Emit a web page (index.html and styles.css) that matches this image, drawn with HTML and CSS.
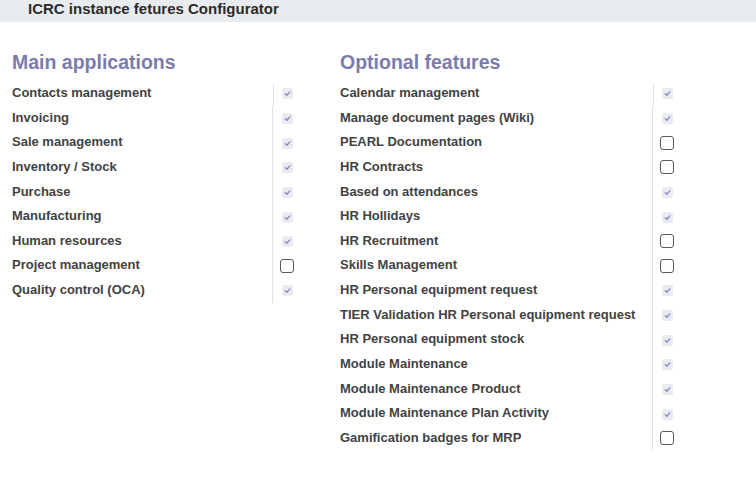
FILE: index.html
```html
<!DOCTYPE html>
<html>
<head>
<meta charset="utf-8">
<link rel="stylesheet" href="styles.css">
</head>
<body>
<div class="topbar">ICRC instance fetures Configurator</div>
<div class="content">
  <section class="group group-main">
    <h2 class="group-title">Main applications</h2>
    <div class="rows">
      <div class="row"><span class="label">Contacts management</span><span class="field"><span class="cb cb-on"><svg viewBox="0 0 11 11"><path d="M3.3 5.7 L4.9 7.2 L7.8 3.9"/></svg></span></span></div>
      <div class="row"><span class="label">Invoicing</span><span class="field"><span class="cb cb-on"><svg viewBox="0 0 11 11"><path d="M3.3 5.7 L4.9 7.2 L7.8 3.9"/></svg></span></span></div>
      <div class="row"><span class="label">Sale management</span><span class="field"><span class="cb cb-on"><svg viewBox="0 0 11 11"><path d="M3.3 5.7 L4.9 7.2 L7.8 3.9"/></svg></span></span></div>
      <div class="row"><span class="label">Inventory / Stock</span><span class="field"><span class="cb cb-on"><svg viewBox="0 0 11 11"><path d="M3.3 5.7 L4.9 7.2 L7.8 3.9"/></svg></span></span></div>
      <div class="row"><span class="label">Purchase</span><span class="field"><span class="cb cb-on"><svg viewBox="0 0 11 11"><path d="M3.3 5.7 L4.9 7.2 L7.8 3.9"/></svg></span></span></div>
      <div class="row"><span class="label">Manufacturing</span><span class="field"><span class="cb cb-on"><svg viewBox="0 0 11 11"><path d="M3.3 5.7 L4.9 7.2 L7.8 3.9"/></svg></span></span></div>
      <div class="row"><span class="label">Human resources</span><span class="field"><span class="cb cb-on"><svg viewBox="0 0 11 11"><path d="M3.3 5.7 L4.9 7.2 L7.8 3.9"/></svg></span></span></div>
      <div class="row"><span class="label">Project management</span><span class="field"><span class="cb cb-off"></span></span></div>
      <div class="row"><span class="label">Quality control (OCA)</span><span class="field"><span class="cb cb-on"><svg viewBox="0 0 11 11"><path d="M3.3 5.7 L4.9 7.2 L7.8 3.9"/></svg></span></span></div>
    </div>
  </section>
  <section class="group group-opt">
    <h2 class="group-title">Optional features</h2>
    <div class="rows">
      <div class="row"><span class="label">Calendar management</span><span class="field"><span class="cb cb-on"><svg viewBox="0 0 11 11"><path d="M3.3 5.7 L4.9 7.2 L7.8 3.9"/></svg></span></span></div>
      <div class="row"><span class="label">Manage document pages (Wiki)</span><span class="field"><span class="cb cb-on"><svg viewBox="0 0 11 11"><path d="M3.3 5.7 L4.9 7.2 L7.8 3.9"/></svg></span></span></div>
      <div class="row"><span class="label">PEARL Documentation</span><span class="field"><span class="cb cb-off"></span></span></div>
      <div class="row"><span class="label">HR Contracts</span><span class="field"><span class="cb cb-off"></span></span></div>
      <div class="row"><span class="label">Based on attendances</span><span class="field"><span class="cb cb-on"><svg viewBox="0 0 11 11"><path d="M3.3 5.7 L4.9 7.2 L7.8 3.9"/></svg></span></span></div>
      <div class="row"><span class="label">HR Hollidays</span><span class="field"><span class="cb cb-on"><svg viewBox="0 0 11 11"><path d="M3.3 5.7 L4.9 7.2 L7.8 3.9"/></svg></span></span></div>
      <div class="row"><span class="label">HR Recruitment</span><span class="field"><span class="cb cb-off"></span></span></div>
      <div class="row"><span class="label">Skills Management</span><span class="field"><span class="cb cb-off"></span></span></div>
      <div class="row"><span class="label">HR Personal equipment request</span><span class="field"><span class="cb cb-on"><svg viewBox="0 0 11 11"><path d="M3.3 5.7 L4.9 7.2 L7.8 3.9"/></svg></span></span></div>
      <div class="row"><span class="label">TIER Validation HR Personal equipment request</span><span class="field"><span class="cb cb-on"><svg viewBox="0 0 11 11"><path d="M3.3 5.7 L4.9 7.2 L7.8 3.9"/></svg></span></span></div>
      <div class="row"><span class="label">HR Personal equipment stock</span><span class="field"><span class="cb cb-on"><svg viewBox="0 0 11 11"><path d="M3.3 5.7 L4.9 7.2 L7.8 3.9"/></svg></span></span></div>
      <div class="row"><span class="label">Module Maintenance</span><span class="field"><span class="cb cb-on"><svg viewBox="0 0 11 11"><path d="M3.3 5.7 L4.9 7.2 L7.8 3.9"/></svg></span></span></div>
      <div class="row"><span class="label">Module Maintenance Product</span><span class="field"><span class="cb cb-on"><svg viewBox="0 0 11 11"><path d="M3.3 5.7 L4.9 7.2 L7.8 3.9"/></svg></span></span></div>
      <div class="row"><span class="label">Module Maintenance Plan Activity</span><span class="field"><span class="cb cb-on"><svg viewBox="0 0 11 11"><path d="M3.3 5.7 L4.9 7.2 L7.8 3.9"/></svg></span></span></div>
      <div class="row"><span class="label">Gamification badges for MRP</span><span class="field"><span class="cb cb-off"></span></span></div>
    </div>
  </section>
</div>
</body>
</html>
```
FILE: styles.css
```css
html, body {
  margin: 0;
  padding: 0;
  background: #ffffff;
  font-family: "Liberation Sans", Arial, sans-serif;
}

.topbar {
  background: #e9ecef;
  color: #2b2b2b;
  font-size: 15px;
  font-weight: bold;
  line-height: 18px;
  padding: 0 0 4px 28px;
}

.content {
  display: grid;
  grid-template-columns: 328px 1fr;
  padding: 27.5px 0 0 12px;
}

.group-title {
  margin: 0 0 7.6px 0;
  font-size: 19.5px;
  line-height: 24px;
  font-weight: bold;
  color: #7c7bad;
}

.rows {
  display: flex;
  flex-direction: column;
}

.row {
  display: flex;
  height: 24.64px;
}

.label {
  font-size: 13px;
  font-weight: bold;
  color: #424242;
  line-height: 24.64px;
  white-space: nowrap;
}

.group-main .label { width: 260px; }
.group-opt .label { width: 312px; }

.field {
  border-left: 1px solid #e2e2e2;
  padding-left: 7px;
  display: flex;
  align-items: center;
}

.row:first-child .field {
  border-left-color: transparent;
  background: linear-gradient(#e2e2e2, #e2e2e2) left 3px / 1px 100% no-repeat;
}

.cb {
  width: 14px;
  height: 14px;
  display: flex;
  align-items: center;
  justify-content: center;
  box-sizing: border-box;
}

.cb-on {
  margin-top: 1px;
}

.cb-on svg {
  width: 11px;
  height: 11px;
  background: #eaeaf1;
  border-radius: 2px;
}

.cb-on path {
  fill: none;
  stroke: #8a88c4;
  stroke-width: 1.4;
  stroke-linecap: round;
  stroke-linejoin: round;
}

.cb-off {
  border: 1.6px solid #5a5a5a;
  border-radius: 3px;
  background: #ffffff;
}
```
